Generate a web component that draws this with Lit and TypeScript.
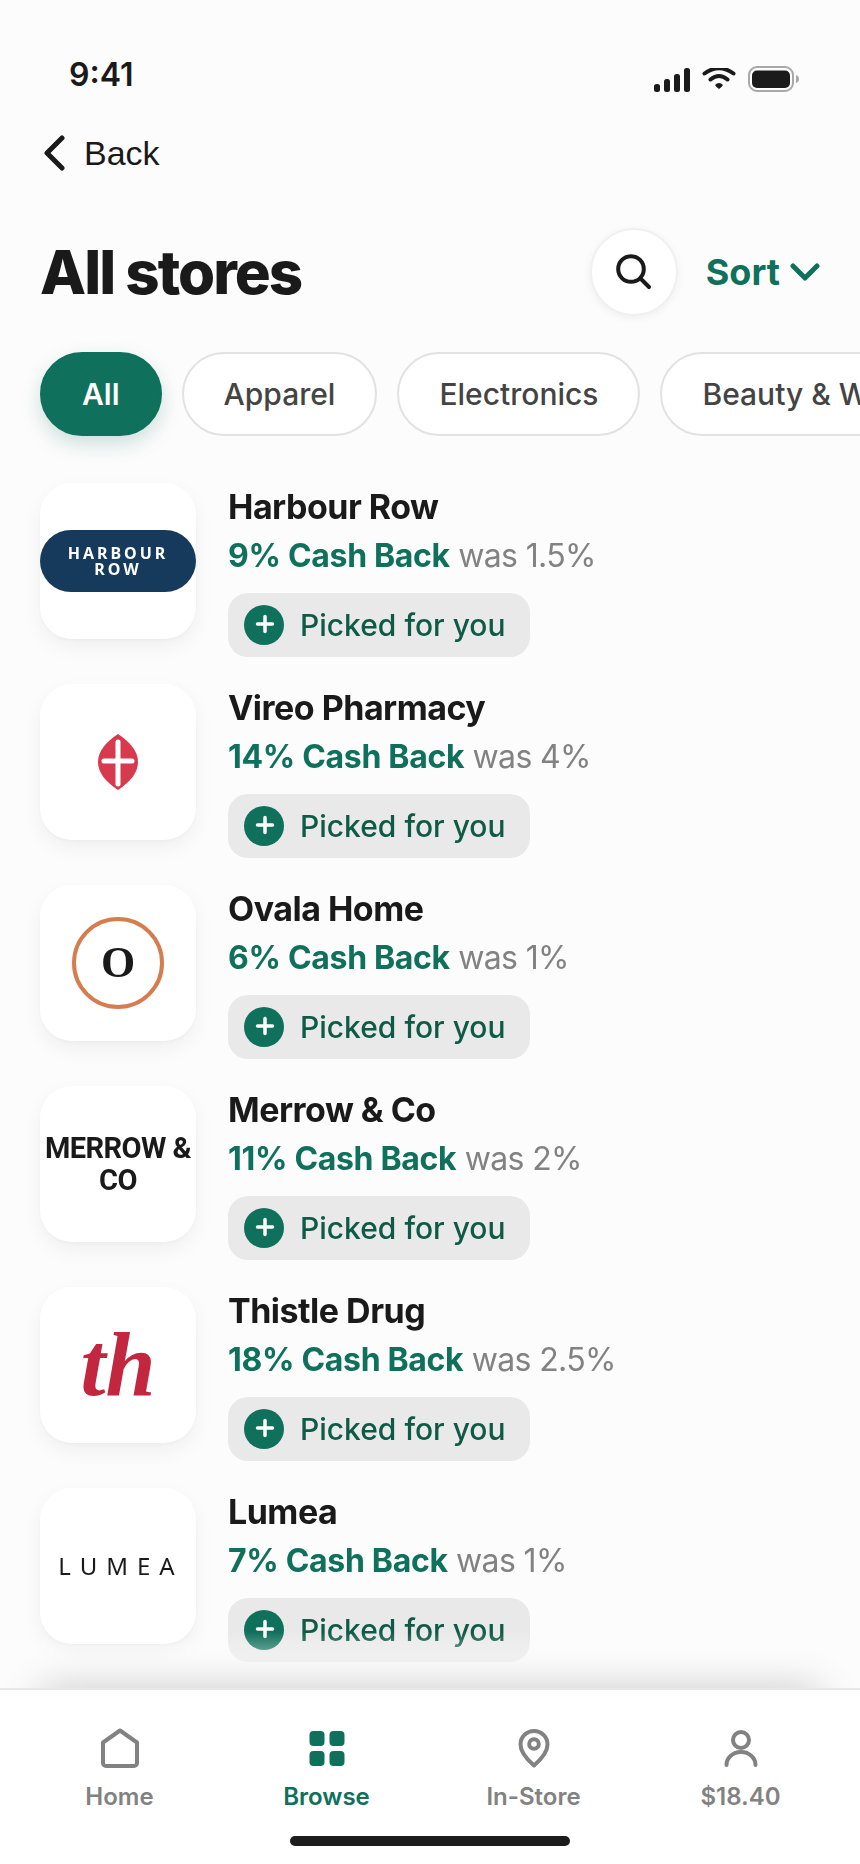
import { LitElement, html, css, svg } from "lit";
import { customElement, property, state } from "lit/decorators.js";
import { classMap } from "lit/directives/class-map.js";

interface Store {
  id: string;
  name: string;
  rate: string;
  was: string;
}

const STORES: Store[] = [
  { id: "harbour", name: "Harbour Row", rate: "9%", was: "1.5%" },
  { id: "vireo", name: "Vireo Pharmacy", rate: "14%", was: "4%" },
  { id: "ovala", name: "Ovala Home", rate: "6%", was: "1%" },
  { id: "merrow", name: "Merrow & Co", rate: "11%", was: "2%" },
  { id: "thistle", name: "Thistle Drug", rate: "18%", was: "2.5%" },
  { id: "lumea", name: "Lumea", rate: "7%", was: "1%" },
];

const CATEGORIES = ["All", "Apparel", "Electronics", "Beauty & Wellness"];

const TABS = [
  {
    label: "Home",
    icon: svg`<path d="M7 18.500 24 6.500l17 12V39a3 3 0 0 1-3 3H10a3 3 0 0 1-3-3z" />`,
  },
  {
    label: "Browse",
    icon: svg`<g fill="currentColor" stroke="none">
      <rect x="6.500" y="7" width="15" height="15" rx="4" /><rect x="26.500" y="7" width="15" height="15" rx="4" />
      <rect x="6.500" y="27" width="15" height="15" rx="4" /><rect x="26.500" y="27" width="15" height="15" rx="4" /></g>`,
  },
  {
    label: "In-Store",
    icon: svg`<path d="M24 41.500C20 38 10.500 29 10.500 20.500a13.500 13.500 0 0 1 27 0C37.500 29 28 38 24 41.500z" /><circle cx="24" cy="20" r="4.800" />`,
  },
  {
    label: "$18.40",
    icon: svg`<circle cx="24" cy="16" r="8" /><path d="M9.500 41a14.500 13 0 0 1 29 0" />`,
  },
];

@customElement("store-logo")
export class StoreLogo extends LitElement {
  @property() brand = "";

  static styles = css`
    :host {
      display: flex;
      align-items: center;
      justify-content: center;
      width: 156px;
      height: 156px;
      border-radius: 32px;
      background: #fff;
      box-shadow: 0 8px 20px rgba(0, 0, 0, 0.05), 0 2px 4px rgba(0, 0, 0, 0.03);
      text-align: center;
      color: #1a1a1a;
    }
    svg {
      display: block;
    }
    .harbour {
      box-sizing: border-box;
      width: 100%;
      padding: 15px 0;
      border-radius: 31px;
      background: #163a5c;
      color: #fff;
      font: 700 16px/16px "Noto Sans", sans-serif;
      letter-spacing: 3px;
    }
    .ovala {
      display: flex;
      align-items: center;
      justify-content: center;
      box-sizing: border-box;
      width: 92px;
      height: 92px;
      border: 4px solid #d67d50;
      border-radius: 50%;
      font: 700 44px/44px "Liberation Serif", serif;
    }
    .merrow {
      font: 700 29px/32px Roboto, sans-serif;
      letter-spacing: -0.02em;
    }
    .thistle {
      color: #c3263f;
      font: italic 700 90px/76px "Liberation Serif", serif;
    }
    .lumea {
      padding-left: 6px;
      font: 400 24px/32px "Noto Sans", sans-serif;
      letter-spacing: 9px;
    }
  `;

  render() {
    switch (this.brand) {
      case "harbour":
        return html`<div class="harbour">HARBOUR<br />ROW</div>`;
      case "vireo":
        return html`<svg width="40" height="56" viewBox="0 0 40 56" aria-label="Vireo Pharmacy">
          <path d="M20 0c12 8 20 17 20 28S32 48 20 56C8 48 0 39 0 28S8 8 20 0z" fill="#d73a4e" />
          <path d="M20 8v42M6 27h28" fill="none" stroke="#fff" stroke-width="5" stroke-linecap="round" />
        </svg>`;
      case "ovala":
        return html`<div class="ovala">O</div>`;
      case "merrow":
        return html`<div class="merrow">MERROW &amp; CO</div>`;
      case "thistle":
        return html`<div class="thistle">th</div>`;
      default:
        return html`<div class="lumea">LUMEA</div>`;
    }
  }
}

@customElement("store-row")
export class StoreRow extends LitElement {
  @property({ attribute: false }) store!: Store;

  static styles = css`
    :host {
      display: flex;
      gap: 32px;
    }
    .body {
      display: flex;
      flex-direction: column;
      align-items: flex-start;
      min-width: 0;
    }
    .name {
      margin: 0;
      color: #1a1a1a;
      font-size: 34px;
      font-weight: 700;
      line-height: 48px;
      letter-spacing: -0.015em;
    }
    .rate {
      margin: 0 0 12px;
      color: #828282;
      font-size: 32px;
      line-height: 50px;
      letter-spacing: -0.02em;
    }
    .rate strong {
      color: #0f705b;
      font-weight: 700;
      letter-spacing: -0.01em;
    }
    .pick {
      display: flex;
      align-items: center;
      gap: 16px;
      height: 64px;
      padding: 0 24px 0 16px;
      border: 0;
      border-radius: 20px;
      background: #e9e9e9;
      color: #0e5a46;
      font: 500 30px/40px Inter, sans-serif;
    }
    .pick svg {
      display: block;
    }
  `;

  render() {
    const s = this.store;
    return html`
      <store-logo brand=${s.id}></store-logo>
      <div class="body">
        <h2 class="name">${s.name}</h2>
        <p class="rate"><strong>${s.rate} Cash Back</strong> was ${s.was}</p>
        <button class="pick" type="button">
          <svg width="40" height="40" viewBox="0 0 40 40" aria-hidden="true">
            <circle cx="20" cy="20" r="20" fill="#0f705b" />
            <path d="M21 11.500v15M13.500 19h15" fill="none" stroke="#fff" stroke-width="3.500" stroke-linecap="round" />
          </svg>
          <span>Picked for you</span>
        </button>
      </div>
    `;
  }
}

@customElement("app-root")
export class AppRoot extends LitElement {
  @state() private category = "All";
  @state() private tab = "Browse";

  static styles = css`
    :host {
      display: flex;
      flex-direction: column;
      min-height: 100vh;
      overflow-x: clip;
      background: #fcfcfc;
      color: #1a1a1a;
      font-family: Inter, sans-serif;
    }
    svg {
      display: block;
    }
    button {
      margin: 0;
      padding: 0;
      border: 0;
      background: none;
      cursor: pointer;
    }
    .status {
      display: flex;
      align-items: center;
      justify-content: space-between;
      padding: 55px 61px 0 69px;
      font-size: 32px;
      font-weight: 600;
      line-height: 40px;
    }
    .back {
      display: flex;
      align-items: center;
      align-self: flex-start;
      gap: 18px;
      margin: 34px 0 0 44px;
      color: #1a1a1a;
      font: 34px/48px "Liberation Sans", sans-serif;
    }
    .head {
      display: flex;
      align-items: center;
      gap: 28px;
      padding: 51px 40px 36px;
    }
    .title {
      flex: 1;
      margin: 0;
      font-size: 60px;
      font-weight: 800;
      line-height: 72px;
      letter-spacing: -2px;
    }
    .search {
      display: flex;
      align-items: center;
      justify-content: center;
      box-sizing: border-box;
      width: 88px;
      height: 88px;
      border: 2px solid #f0f0f0;
      border-radius: 50%;
      background: #fff;
      box-shadow: 0 2px 8px rgba(0, 0, 0, 0.06);
      color: #1a1a1a;
    }
    .sort {
      display: flex;
      align-items: center;
      gap: 10px;
      color: #0f705b;
      font: 700 36px/44px Inter, sans-serif;
    }
    .chips {
      display: flex;
      gap: 20px;
      padding: 0 40px;
    }
    .chip {
      flex: none;
      height: 84px;
      padding: 0 40px;
      border: 2px solid #e2e2e2;
      border-radius: 42px;
      background: #fff;
      color: #444;
      font: 500 30px/40px Inter, sans-serif;
    }
    .chip.on {
      border-color: #0f705b;
      background: #0f705b;
      box-shadow: 0 8px 20px rgba(15, 112, 91, 0.2);
      color: #fff;
      font-weight: 600;
    }
    .stores {
      display: flex;
      flex: 1;
      flex-direction: column;
      gap: 27px;
      margin: 0;
      padding: 47px 40px 24px;
      list-style: none;
      mask-image: linear-gradient(#000 calc(100% - 56px), transparent);
    }
    .dock {
      position: sticky;
      bottom: 0;
      border-top: 2px solid #e8e8e8;
      background: #fff;
      box-shadow: 0 -40px 40px -40px rgba(0, 0, 0, 0.2);
    }
    .tabs {
      display: grid;
      grid-template-columns: repeat(4, 1fr);
      padding: 34px 16px 24px;
    }
    .tab {
      display: flex;
      flex-direction: column;
      align-items: center;
      gap: 10px;
      color: #828282;
      text-decoration: none;
      font-size: 24px;
      font-weight: 600;
      line-height: 30px;
    }
    .tab.on {
      color: #0f705b;
    }
    .bar {
      width: 280px;
      height: 10px;
      margin: 0 auto 18px;
      border-radius: 5px;
      background: #1c1c1c;
    }
  `;

  render() {
    return html`
      <div class="status">
        <span>9:41</span>
        <svg width="146" height="40" viewBox="0 0 146 40" aria-hidden="true">
          <g fill="#1a1a1a">
            <rect x="1" y="29" width="6" height="8" rx="2.500" />
            <rect x="11" y="24" width="6" height="13" rx="2.500" />
            <rect x="21" y="19" width="6" height="18" rx="2.500" />
            <rect x="31" y="13" width="6" height="24" rx="2.500" />
            <path d="M62 30q4-4 8 0-1 2-4 4-3-2-4-4z" />
            <rect x="99" y="15.500" width="38" height="17.500" rx="5" />
          </g>
          <svg x="48" y="13" width="38" height="16" viewBox="48 13 38 16">
            <path d="M51.500 18.500q14.500-10.500 29 0M57.500 24.500q8.500-7 17 0" fill="none" stroke="#1a1a1a" stroke-width="4" stroke-linecap="round" />
          </svg>
          <rect x="96" y="12" width="44" height="24" rx="8" fill="none" stroke="#a8a8a8" stroke-width="2" />
          <path d="M143 20q3 1 3 4t-3 4z" fill="#a8a8a8" />
        </svg>
      </div>
      <button class="back" type="button">
        <svg width="22" height="36" viewBox="0 0 22 36" aria-hidden="true">
          <path d="M18 3 3 18l15 15" fill="none" stroke="currentColor" stroke-width="5" stroke-linecap="round" stroke-linejoin="round" />
        </svg>
        Back
      </button>
      <header class="head">
        <h1 class="title">All stores</h1>
        <button class="search" type="button" aria-label="Search">
          <svg width="36" height="36" viewBox="0 0 36 36" aria-hidden="true">
            <g fill="none" stroke="currentColor" stroke-width="4" stroke-linecap="round"><circle cx="15" cy="15" r="12.800" /><path d="m24.500 24.500 8.500 8.500" /></g>
          </svg>
        </button>
        <button class="sort" type="button">
          Sort
          <svg width="30" height="20" viewBox="0 0 30 20" aria-hidden="true">
            <path d="m3 4 12 12L27 4" fill="none" stroke="currentColor" stroke-width="5" stroke-linecap="round" stroke-linejoin="round" />
          </svg>
        </button>
      </header>
      <nav class="chips" aria-label="Categories">
        ${CATEGORIES.map(
          (c) => html`<button type="button" class=${classMap({ chip: true, on: c === this.category })} @click=${() => (this.category = c)}>${c}</button>`
        )}
      </nav>
      <ul class="stores">
        ${STORES.map((s) => html`<li><store-row .store=${s}></store-row></li>`)}
      </ul>
      <footer class="dock">
        <nav class="tabs" aria-label="Main">
          ${TABS.map(
            (t) => html`<a href="#" class=${classMap({ tab: true, on: t.label === this.tab })} @click=${(e: Event) => { e.preventDefault(); this.tab = t.label; }}>
              <svg width="48" height="48" viewBox="0 0 48 48" fill="none" stroke="currentColor" stroke-width="4" stroke-linecap="round" stroke-linejoin="round" aria-hidden="true">${t.icon}</svg>
              <span>${t.label}</span>
            </a>`
          )}
        </nav>
        <div class="bar"></div>
      </footer>
    `;
  }
}
